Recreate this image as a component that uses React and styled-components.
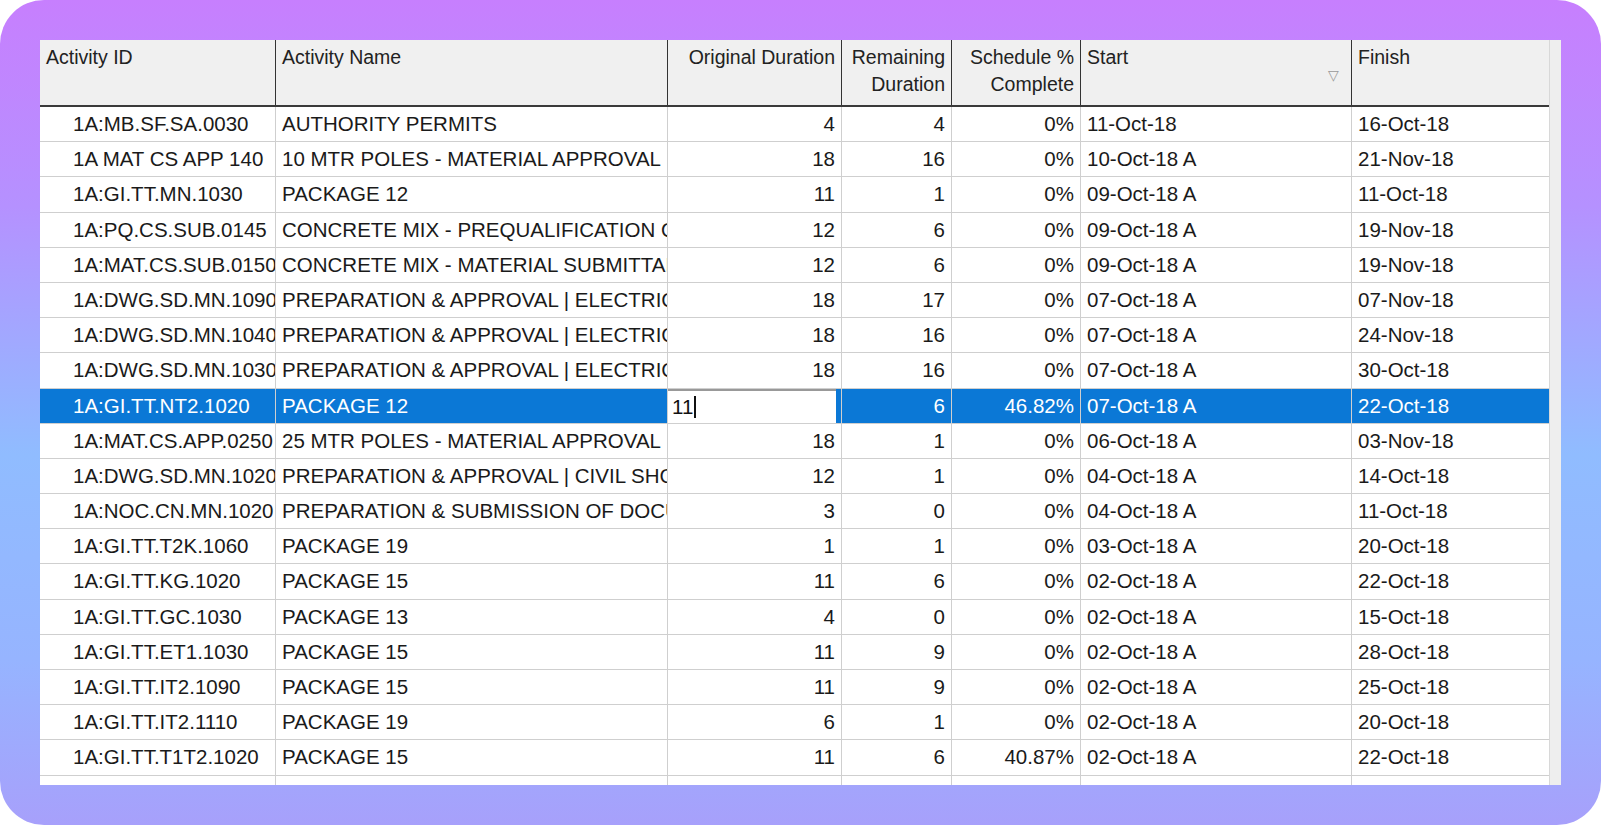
import React from "react";
import styled, { createGlobalStyle } from "styled-components";

const Global = createGlobalStyle`
  html, body { margin: 0; padding: 0; background: #fff; }
  body { width: 1601px; height: 825px; overflow: hidden; }
`;

const Frame = styled.div`
  width: 1601px; height: 825px; box-sizing: border-box;
  border-radius: 44px;
  background: linear-gradient(180deg, #c77ffe 0%, #b591ff 25%, #90bcff 55%, #96b4ff 80%, #a7a0fb 100%);
  padding: 40px;
`;

const Card = styled.div`
  width: 1521px; height: 745px; background: #fff; overflow: hidden;
  display: flex;
`;

const Table = styled.div`
  width: 1509px; display: flex; flex-direction: column;
  font-family: "Liberation Sans Narrow", "Liberation Sans", Arial, sans-serif;
  font-size: 20.5px; color: #1a1a1a;
`;

const Scroll = styled.div`
  flex: 1; background: #eeeeee; border-left: 1px solid #d8d8d8;
`;

const cols = "236px 392px 174px 110px 129px 271px 197px";

const HeadRow = styled.div`
  display: grid; grid-template-columns: ${cols};
  height: 67px; flex: none; box-sizing: border-box;
  background: #f0f0f0; border-bottom: 2px solid #3a3a3a;
`;

const HeadCell = styled.div`
  border-right: 1px solid #333;
  padding: 4px 6px 0; line-height: 27px; font-size: 19.5px; color: #222;
  text-align: ${p => (p.$right ? "right" : "left")};
  position: relative; white-space: nowrap; overflow: hidden;
  &:last-child { border-right: none; }
`;

const SortMark = styled.span`
  position: absolute; right: 12px; top: 22px; color: #999; font-size: 14px;
`;

const Row = styled.div`
  display: grid; grid-template-columns: ${cols};
  height: 35.2px; flex: none; border-bottom: 1px solid #cfcfcf; box-sizing: border-box;
  background: ${p => (p.$sel ? "#0b78d6" : "#fff")};
  color: ${p => (p.$sel ? "#fff" : "#1a1a1a")};
`;

const Cell = styled.div`
  border-right: 1px solid #cfcfcf; box-sizing: border-box;
  padding: ${p => (p.$indent ? "0 0 0 33px" : "0 6px")};
  line-height: 34px; white-space: nowrap; overflow: hidden;
  text-align: ${p => (p.$right ? "right" : "left")};
  &:last-child { border-right: none; }
`;

const EditCell = styled(Cell)`
  padding: 0;
`;

const Edit = styled.div`
  background: #fff; color: #111; border-top: 2px solid #999;
  margin-right: 5px; padding: 0 4px; line-height: 32px;
`;

const Caret = styled.span`
  display: inline-block; width: 2px; height: 22px; background: #111;
  vertical-align: middle; margin-left: 1px; margin-top: -3px;
`;

const data = [
  ["1A:MB.SF.SA.0030", "AUTHORITY PERMITS", "4", "4", "0%", "11-Oct-18", "16-Oct-18"],
  ["1A MAT CS APP 140", "10 MTR POLES - MATERIAL APPROVAL", "18", "16", "0%", "10-Oct-18 A", "21-Nov-18"],
  ["1A:GI.TT.MN.1030", "PACKAGE 12", "11", "1", "0%", "09-Oct-18 A", "11-Oct-18"],
  ["1A:PQ.CS.SUB.0145", "CONCRETE MIX - PREQUALIFICATION OF", "12", "6", "0%", "09-Oct-18 A", "19-Nov-18"],
  ["1A:MAT.CS.SUB.0150", "CONCRETE MIX - MATERIAL SUBMITTAL", "12", "6", "0%", "09-Oct-18 A", "19-Nov-18"],
  ["1A:DWG.SD.MN.1090", "PREPARATION & APPROVAL | ELECTRIC.", "18", "17", "0%", "07-Oct-18 A", "07-Nov-18"],
  ["1A:DWG.SD.MN.1040", "PREPARATION & APPROVAL | ELECTRIC.", "18", "16", "0%", "07-Oct-18 A", "24-Nov-18"],
  ["1A:DWG.SD.MN.1030", "PREPARATION & APPROVAL | ELECTRIC.", "18", "16", "0%", "07-Oct-18 A", "30-Oct-18"],
  ["1A:GI.TT.NT2.1020", "PACKAGE 12", "11", "6", "46.82%", "07-Oct-18 A", "22-Oct-18", true],
  ["1A:MAT.CS.APP.0250", "25 MTR POLES - MATERIAL APPROVAL", "18", "1", "0%", "06-Oct-18 A", "03-Nov-18"],
  ["1A:DWG.SD.MN.1020", "PREPARATION & APPROVAL | CIVIL SHC", "12", "1", "0%", "04-Oct-18 A", "14-Oct-18"],
  ["1A:NOC.CN.MN.1020", "PREPARATION & SUBMISSION OF DOCU", "3", "0", "0%", "04-Oct-18 A", "11-Oct-18"],
  ["1A:GI.TT.T2K.1060", "PACKAGE 19", "1", "1", "0%", "03-Oct-18 A", "20-Oct-18"],
  ["1A:GI.TT.KG.1020", "PACKAGE 15", "11", "6", "0%", "02-Oct-18 A", "22-Oct-18"],
  ["1A:GI.TT.GC.1030", "PACKAGE 13", "4", "0", "0%", "02-Oct-18 A", "15-Oct-18"],
  ["1A:GI.TT.ET1.1030", "PACKAGE 15", "11", "9", "0%", "02-Oct-18 A", "28-Oct-18"],
  ["1A:GI.TT.IT2.1090", "PACKAGE 15", "11", "9", "0%", "02-Oct-18 A", "25-Oct-18"],
  ["1A:GI.TT.IT2.1110", "PACKAGE 19", "6", "1", "0%", "02-Oct-18 A", "20-Oct-18"],
  ["1A:GI.TT.T1T2.1020", "PACKAGE 15", "11", "6", "40.87%", "02-Oct-18 A", "22-Oct-18"],
  ["", "", "", "", "", "", ""],
];

export default function App() {
  return (
    <>
      <Global />
      <Frame>
        <Card>
          <Table>
            <HeadRow>
              <HeadCell>Activity ID</HeadCell>
              <HeadCell>Activity Name</HeadCell>
              <HeadCell $right>Original Duration</HeadCell>
              <HeadCell $right>Remaining<br />Duration</HeadCell>
              <HeadCell $right>Schedule %<br />Complete</HeadCell>
              <HeadCell>Start<SortMark>▽</SortMark></HeadCell>
              <HeadCell>Finish</HeadCell>
            </HeadRow>
            {data.map((r, i) => (
              <Row key={i} $sel={r[7]}>
                <Cell $indent>{r[0]}</Cell>
                <Cell>{r[1]}</Cell>
                {r[7] ? (
                  <EditCell><Edit>11<Caret /></Edit></EditCell>
                ) : (
                  <Cell $right>{r[2]}</Cell>
                )}
                <Cell $right>{r[3]}</Cell>
                <Cell $right>{r[4]}</Cell>
                <Cell>{r[5]}</Cell>
                <Cell>{r[6]}</Cell>
              </Row>
            ))}
          </Table>
          <Scroll />
        </Card>
      </Frame>
    </>
  );
}
